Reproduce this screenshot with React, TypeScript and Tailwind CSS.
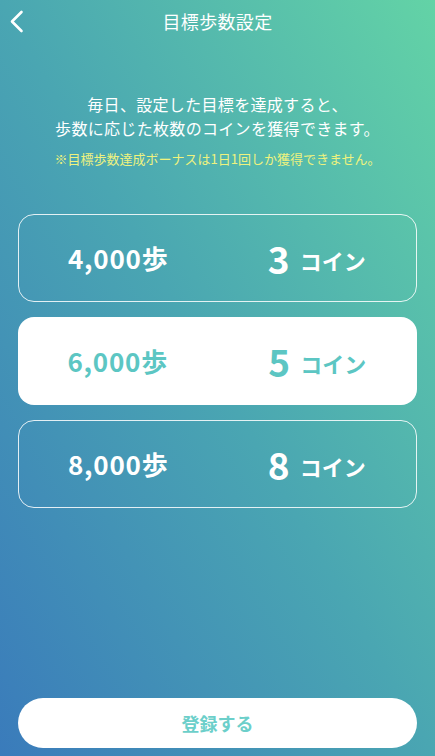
import React, { useState } from "react";

const goals = [
  { steps: "4,000歩", coins: 3 },
  { steps: "6,000歩", coins: 5 },
  { steps: "8,000歩", coins: 8 },
];

export default function App() {
  const [selected, setSelected] = useState(1);

  return (
    <div
      className="relative flex flex-col w-[435px] h-[756px] overflow-hidden bg-[linear-gradient(to_top_right,#3a7bbb_0%,#4aa6b2_50%,#63d3a6_100%)] text-white"
      style={{ fontFamily: '"Noto Sans CJK JP", "Noto Sans", sans-serif' }}
    >
      {/* Header */}
      <div className="relative flex items-center justify-center h-[42px]">
        <button className="absolute left-[9px] top-[10px] w-[16px] h-[24px] flex items-center justify-center">
          <svg viewBox="0 0 16 24" className="w-[16px] h-[24px]" fill="none" stroke="white" strokeWidth="2.6" strokeLinecap="round" strokeLinejoin="round">
            <path d="M12.5 2 L3 11.5 L12.5 21" />
          </svg>
        </button>
        <h1 className="text-[18px] leading-none tracking-[0.02em]">目標歩数設定</h1>
      </div>

      {/* Description */}
      <div className="mt-[50px] flex flex-col items-center text-center">
        <p className="text-[16px] leading-[24px] tracking-[0.02em]">
          毎日、設定した目標を達成すると、
          <br />
          歩数に応じた枚数のコインを獲得できます。
        </p>
        <p className="mt-[10px] text-[13px] leading-[18px] text-[#eef27e]">
          ※目標歩数達成ボーナスは1日1回しか獲得できません。
        </p>
      </div>

      {/* Goal options */}
      <div className="mt-[46px] px-[18px] flex flex-col gap-[15px]">
        {goals.map((g, i) => {
          const active = i === selected;
          return (
            <button
              key={g.steps}
              onClick={() => setSelected(i)}
              className={`h-[88px] rounded-[16px] grid grid-cols-2 items-center font-bold ${
                active ? "bg-white text-[#5cc6c3]" : "border border-white/85 text-white"
              }`}
            >
              <span className="text-center text-[26px] leading-none tracking-[0.03em]">{g.steps}</span>
              <span className="flex items-center justify-center gap-[10px]">
                <span className="text-[37px] leading-none">{g.coins}</span>
                <span className="text-[22px] leading-none mt-[3px] font-semibold">コイン</span>
              </span>
            </button>
          );
        })}
      </div>

      {/* Submit */}
      <div className="mt-auto px-[18px] pb-[8px]">
        <button className="w-full h-[50px] rounded-full bg-white text-[#6ccfca] text-[18px] font-bold">
          登録する
        </button>
      </div>
    </div>
  );
}
